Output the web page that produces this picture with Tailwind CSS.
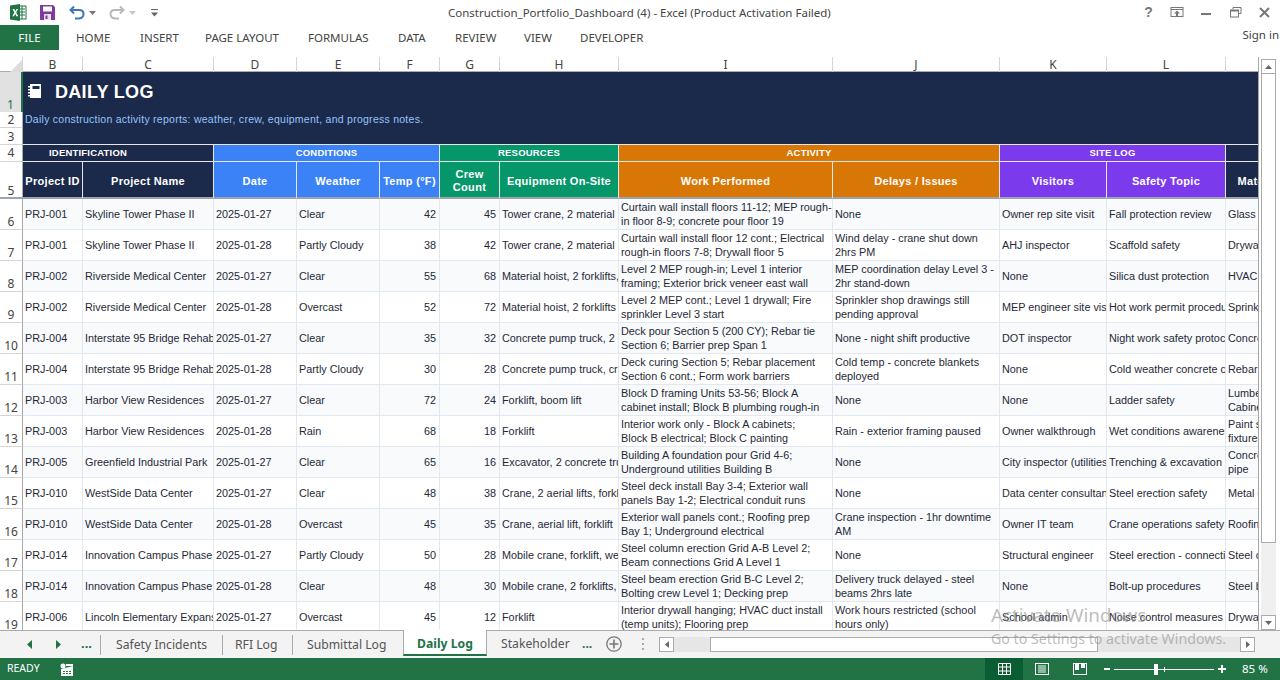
<!DOCTYPE html>
<html>
<head>
	<title>Daily Log - Excel</title>
	<meta charset="UTF-8">
	<script src="https://cdn.jsdelivr.net/npm/@tailwindcss/browser@4"></script>
</head>
<body class="bg-white overflow-hidden">
<div class="relative w-[1280px] h-[680px] flex flex-col overflow-hidden font-['Open_Sans',sans-serif] text-[#444]">

	<!-- title bar -->
	<div class="h-[25px] flex items-center shrink-0">
		<svg class="ml-[10px] w-[17px] h-[17px]" viewBox="0 0 17 17"><rect x="5" y="2" width="11" height="13" fill="#fff" stroke="#217346"/><path d="M9 5h6M9 8h6M9 11h6M12 2v13" stroke="#217346"/><path d="M0 1.500 10 0v17L0 15.500z" fill="#217346"/><path d="M2.500 5h1.800l1 2.200L6.400 5h1.700L6.200 8.500 8.200 12.300H6.400L5.200 9.800 4 12.300H2.300L4.300 8.500z" fill="#fff"/></svg>
		<svg class="ml-[13px] w-[15px] h-[15px]" viewBox="0 0 15 15"><path d="M0 0h13l2 2v13H0z" fill="#80399c"/><rect x="3" y="1.500" width="9" height="5" fill="#fff"/><rect x="4" y="9" width="7" height="6" fill="#e9dcef"/><rect x="5.500" y="10.500" width="2" height="3.500" fill="#80399c"/></svg>
		<svg class="ml-[14px] w-[16px] h-[15px]" viewBox="0 0 16 15"><path d="M5 1.500 1.500 5 5 8.500M2 5h8c6 0 6 8 0 8.500H6" fill="none" stroke="#3f77b5" stroke-width="2"/></svg>
		<svg class="ml-[4px] w-[7px] h-[4px]" viewBox="0 0 7 4"><path d="M0 0h7L3.500 4z" fill="#777"/></svg>
		<svg class="ml-[13px] w-[16px] h-[15px]" viewBox="0 0 16 15"><path d="M11 1.500 14.500 5 11 8.500M14 5H6c-6 0-6 8 0 8.500h4" fill="none" stroke="#b8b8b8" stroke-width="2"/></svg>
		<svg class="ml-[4px] w-[7px] h-[4px]" viewBox="0 0 7 4"><path d="M0 0h7L3.500 4z" fill="#c6c6c6"/></svg>
		<svg class="ml-[15px] w-[7px] h-[8px]" viewBox="0 0 7 8"><path d="M0 0h7v1H0zM0 3.500h7L3.500 7.500z" fill="#666"/></svg>
		<span class="ml-[290px] text-[11.500px] text-[#444] whitespace-nowrap font-['Noto_Sans',sans-serif]">Construction_Portfolio_Dashboard (4) - Excel (Product Activation Failed)</span>
		<div class="ml-auto flex items-center text-[#777] h-full">
			<span class="w-[29px] text-center font-bold text-[14px] font-['Liberation_Sans',sans-serif]">?</span>
			<svg class="w-[29px] h-[11px]" viewBox="0 0 29 11"><rect x="8" y="0.500" width="12" height="9" fill="none" stroke="#777"/><path d="M8 2.500h12" stroke="#777"/><path d="M14 3.500l3 3h-2v3h-2v-3h-2z" fill="#777"/></svg>
			<svg class="w-[29px] h-[11px]" viewBox="0 0 29 11"><rect x="9" y="6" width="10" height="2" fill="#777"/></svg>
			<svg class="w-[29px] h-[11px]" viewBox="0 0 29 11"><path d="M12 2.500V.5h8v6h-2.500" fill="none" stroke="#777"/><rect x="9.500" y="3" width="8" height="7" fill="#fff" stroke="#777"/><path d="M9 3h9v1.500H9z" fill="#777"/></svg>
			<svg class="w-[29px] h-[11px]" viewBox="0 0 29 11"><path d="M10 1l9 9M19 1l-9 9" stroke="#777" stroke-width="2"/></svg>
			<span class="w-[1px]"></span>
		</div>
	</div>

	<!-- ribbon tabs -->
	<div class="h-[25px] flex items-center shrink-0 text-[11.500px] text-[#444] font-['Noto_Sans',sans-serif] relative">
		<div class="w-[59px] h-full bg-[#217346] text-white flex items-center justify-center">FILE</div>
		<span class="ml-[17px] w-[64px]">HOME</span>
		<span class="w-[65px]">INSERT</span>
		<span class="w-[103px]">PAGE LAYOUT</span>
		<span class="w-[90px]">FORMULAS</span>
		<span class="w-[57px]">DATA</span>
		<span class="w-[69px]">REVIEW</span>
		<span class="w-[56px]">VIEW</span>
		<span>DEVELOPER</span>
		<span class="ml-auto mr-[1px] -mt-[6px]">Sign in</span>
	</div>
	<div class="h-[7px] shrink-0"></div>

	<!-- sheet + vertical scrollbar -->
	<div class="h-[573px] shrink-0 flex relative">
		<div class="w-[1259px] overflow-hidden border-r border-[#a6a6a6] font-['Liberation_Sans',sans-serif] text-[10.850px] text-[#1f2937] h-full">
			<table class="table-fixed border-separate border-spacing-0 w-[1356px] [&_td]:overflow-hidden [&_td]:p-0 [&_td]:pl-[2px] [&_td]:border-r [&_td]:border-b [&_td]:border-[#e2e8f0] [&_td]:whitespace-nowrap [&_td]:leading-[14px] [&_th]:p-0 [&_th]:overflow-hidden [&_th]:font-bold [&_th]:text-white [&_th]:border-r [&_th]:border-b [&_th]:border-[#e5e7eb] [&_th]:leading-[15px] [&_tbody_tr:nth-child(odd)_td]:bg-[#f8fafc]">
				<colgroup>
					<col class="w-[23px]"><col class="w-[60px]"><col class="w-[131px]"><col class="w-[83px]"><col class="w-[83px]"><col class="w-[60px]"><col class="w-[60px]"><col class="w-[119px]"><col class="w-[214px]"><col class="w-[167px]"><col class="w-[107px]"><col class="w-[119px]"><col class="w-[130px]">
				</colgroup>
				<thead>
					<tr class="h-[15px] [&_th]:!border-b-0 [&_th]:!font-normal [&_th]:!text-[#444] [&_th]:!text-[12px] [&_th]:bg-white [&_th]:!border-[#d4d4d4] [&_th]:shadow-[inset_0_-1px_0_#ababab] font-['Noto_Sans',sans-serif]">
						<th><svg class="ml-[10px] mt-[3px] w-[12px] h-[12px]" viewBox="0 0 12 12"><path d="M12 0v12H0z" fill="#dcdcdc"/></svg></th>
						<th>B</th><th>C</th><th>D</th><th>E</th><th>F</th><th>G</th><th>H</th><th>I</th><th>J</th><th>K</th><th>L</th><th>M</th>
					</tr>
					<tr class="h-[40px]">
						<th class="!bg-[#e1e1e1] !border-b-0 !border-r-2 !border-[#217346] !text-[#217346] !font-normal !text-[12px] align-bottom font-['Noto_Sans',sans-serif]">1</th>
						<th colspan="12" class="text-left bg-[#1b2a4a] !border-0">
							<div class="flex items-center pt-[1px] pl-[5px] text-[18px] tracking-[0.3px]">
								<svg class="w-[14px] h-[14px] -mt-[3px]" viewBox="0 0 14 14"><path d="M2 0h11v14H2z" fill="#fff"/><path d="M0 2h3v1.500H0zM0 5h3v1.500H0zM0 8h3v1.500H0zM0 11h3v1.500H0z" fill="#fff"/><rect x="4.500" y="2" width="7" height="3" fill="#1b2a4a"/></svg>
								<span class="ml-[13px]">DAILY LOG</span>
							</div>
						</th>
					</tr>
					<tr class="h-[16px]">
						<th class="!bg-white !border-r !border-b-[#d4d4d4] !border-r-[#ababab] !text-[#444] !font-normal !text-[12px] font-['Noto_Sans',sans-serif]">2</th>
						<th colspan="12" class="text-left bg-[#1b2a4a] !border-0 !pl-[2px] !pb-[1px] !font-normal !text-[#93c5fd] !text-[10.500px] tracking-[0.26px]">Daily construction activity reports: weather, crew, equipment, and progress notes.</th>
					</tr>
					<tr class="h-[17px]">
						<th class="!bg-white !border-r-[#ababab] !border-b-[#d4d4d4] !text-[#444] !font-normal !text-[12px] font-['Noto_Sans',sans-serif]">3</th>
						<th colspan="12" class="bg-[#1b2a4a] !border-r-0"></th>
					</tr>
					<tr class="h-[17px] text-[9.500px] tracking-[0.2px] [&_th]:!pb-[1px]">
						<th class="!bg-white !border-r-[#ababab] !border-b-[#d4d4d4] !text-[#444] !font-normal !text-[12px] font-['Noto_Sans',sans-serif]">4</th>
						<th colspan="2" class="bg-[#1b2a4a] text-left !pl-[26px]">IDENTIFICATION</th>
						<th colspan="3" class="bg-[#3b82f6]">CONDITIONS</th>
						<th colspan="2" class="bg-[#059669]">RESOURCES</th>
						<th colspan="2" class="bg-[#d97706]">ACTIVITY</th>
						<th colspan="2" class="bg-[#7c3aed]">SITE LOG</th>
						<th class="bg-[#1b2a4a]"></th>
					</tr>
					<tr class="h-[37px] text-[11px] tracking-[0.3px] [&_th]:!pt-[3px] [&_th]:!leading-[13px] [&_th]:border-b-2 [&_th]:border-b-[#9ca3af]">
						<th class="!bg-white !border-r-[#ababab] !text-[#444] !font-normal !text-[12px] align-bottom font-['Noto_Sans',sans-serif]">5</th>
						<th class="bg-[#1b2a4a]">Project ID</th>
						<th class="bg-[#1b2a4a]">Project Name</th>
						<th class="bg-[#3b82f6]">Date</th>
						<th class="bg-[#3b82f6]">Weather</th>
						<th class="bg-[#3b82f6]">Temp (°F)</th>
						<th class="bg-[#059669]"><div class="-mt-[1px]">Crew Count</div></th>
						<th class="bg-[#059669]">Equipment On-Site</th>
						<th class="bg-[#d97706]">Work Performed</th>
						<th class="bg-[#d97706]">Delays / Issues</th>
						<th class="bg-[#7c3aed]">Visitors</th>
						<th class="bg-[#7c3aed]">Safety Topic</th>
						<th class="bg-[#1b2a4a]">Materials Delivered</th>
					</tr>
				</thead>
				<tbody class="[&_tr]:h-[31px] [&_td:first-child]:!bg-white [&_td:first-child]:!border-r-[#a6a6a6] [&_td:first-child]:!border-b-[#d4d4d4] [&_td:first-child]:align-bottom [&_td:first-child]:text-center [&_td:first-child]:text-[12px] [&_td:first-child]:text-[#444] [&_td:first-child]:!p-0 [&_td:first-child]:font-['Noto_Sans',sans-serif] [&_.n]:text-right [&_.n]:pr-[3px]">
					<tr><td>6</td><td>PRJ-001</td><td>Skyline Tower Phase II</td><td>2025-01-27</td><td>Clear</td><td class="n">42</td><td class="n">45</td><td>Tower crane, 2 material hoists</td><td>Curtain wall install floors 11-12; MEP rough-<br>in floor 8-9; concrete pour floor 19</td><td>None</td><td>Owner rep site visit</td><td>Fall protection review</td><td>Glass panels</td></tr>
					<tr><td>7</td><td>PRJ-001</td><td>Skyline Tower Phase II</td><td>2025-01-28</td><td>Partly Cloudy</td><td class="n">38</td><td class="n">42</td><td>Tower crane, 2 material hoists</td><td>Curtain wall install floor 12 cont.; Electrical<br>rough-in floors 7-8; Drywall floor 5</td><td>Wind delay - crane shut down<br>2hrs PM</td><td>AHJ inspector</td><td>Scaffold safety</td><td>Drywall</td></tr>
					<tr><td>8</td><td>PRJ-002</td><td>Riverside Medical Center</td><td>2025-01-27</td><td>Clear</td><td class="n">55</td><td class="n">68</td><td>Material hoist, 2 forklifts, scissor lift</td><td>Level 2 MEP rough-in; Level 1 interior<br>framing; Exterior brick veneer east wall</td><td>MEP coordination delay Level 3 -<br>2hr stand-down</td><td>None</td><td>Silica dust protection</td><td>HVAC units</td></tr>
					<tr><td>9</td><td>PRJ-002</td><td>Riverside Medical Center</td><td>2025-01-28</td><td>Overcast</td><td class="n">52</td><td class="n">72</td><td>Material hoist, 2 forklifts</td><td>Level 2 MEP cont.; Level 1 drywall; Fire<br>sprinkler Level 3 start</td><td>Sprinkler shop drawings still<br>pending approval</td><td>MEP engineer site visit</td><td>Hot work permit procedures</td><td>Sprinkler pipe</td></tr>
					<tr><td>10</td><td>PRJ-004</td><td>Interstate 95 Bridge Rehab</td><td>2025-01-27</td><td>Clear</td><td class="n">35</td><td class="n">32</td><td>Concrete pump truck, 2 cranes</td><td>Deck pour Section 5 (200 CY); Rebar tie<br>Section 6; Barrier prep Span 1</td><td>None - night shift productive</td><td>DOT inspector</td><td>Night work safety protocols</td><td>Concrete</td></tr>
					<tr><td>11</td><td>PRJ-004</td><td>Interstate 95 Bridge Rehab</td><td>2025-01-28</td><td>Partly Cloudy</td><td class="n">30</td><td class="n">28</td><td>Concrete pump truck, crane</td><td>Deck curing Section 5; Rebar placement<br>Section 6 cont.; Form work barriers</td><td>Cold temp - concrete blankets<br>deployed</td><td>None</td><td>Cold weather concrete care</td><td>Rebar</td></tr>
					<tr><td>12</td><td>PRJ-003</td><td>Harbor View Residences</td><td>2025-01-27</td><td>Clear</td><td class="n">72</td><td class="n">24</td><td>Forklift, boom lift</td><td>Block D framing Units 53-56; Block A<br>cabinet install; Block B plumbing rough-in</td><td>None</td><td>None</td><td>Ladder safety</td><td>Lumber package,<br>Cabinets</td></tr>
					<tr><td>13</td><td>PRJ-003</td><td>Harbor View Residences</td><td>2025-01-28</td><td>Rain</td><td class="n">68</td><td class="n">18</td><td>Forklift</td><td>Interior work only - Block A cabinets;<br>Block B electrical; Block C painting</td><td>Rain - exterior framing paused</td><td>Owner walkthrough</td><td>Wet conditions awareness</td><td>Paint supplies,<br>fixtures</td></tr>
					<tr><td>14</td><td>PRJ-005</td><td>Greenfield Industrial Park</td><td>2025-01-27</td><td>Clear</td><td class="n">65</td><td class="n">16</td><td>Excavator, 2 concrete trucks</td><td>Building A foundation pour Grid 4-6;<br>Underground utilities Building B</td><td>None</td><td>City inspector (utilities)</td><td>Trenching &amp; excavation</td><td>Concrete forms,<br>pipe</td></tr>
					<tr><td>15</td><td>PRJ-010</td><td>WestSide Data Center</td><td>2025-01-27</td><td>Clear</td><td class="n">48</td><td class="n">38</td><td>Crane, 2 aerial lifts, forklift</td><td>Steel deck install Bay 3-4; Exterior wall<br>panels Bay 1-2; Electrical conduit runs</td><td>None</td><td>Data center consultant</td><td>Steel erection safety</td><td>Metal deck</td></tr>
					<tr><td>16</td><td>PRJ-010</td><td>WestSide Data Center</td><td>2025-01-28</td><td>Overcast</td><td class="n">45</td><td class="n">35</td><td>Crane, aerial lift, forklift</td><td>Exterior wall panels cont.; Roofing prep<br>Bay 1; Underground electrical</td><td>Crane inspection - 1hr downtime<br>AM</td><td>Owner IT team</td><td>Crane operations safety</td><td>Roofing</td></tr>
					<tr><td>17</td><td>PRJ-014</td><td>Innovation Campus Phase 1</td><td>2025-01-27</td><td>Partly Cloudy</td><td class="n">50</td><td class="n">28</td><td>Mobile crane, forklift, welders</td><td>Steel column erection Grid A-B Level 2;<br>Beam connections Grid A Level 1</td><td>None</td><td>Structural engineer</td><td>Steel erection - connections</td><td>Steel columns</td></tr>
					<tr><td>18</td><td>PRJ-014</td><td>Innovation Campus Phase 1</td><td>2025-01-28</td><td>Clear</td><td class="n">48</td><td class="n">30</td><td>Mobile crane, 2 forklifts, welders</td><td>Steel beam erection Grid B-C Level 2;<br>Bolting crew Level 1; Decking prep</td><td>Delivery truck delayed - steel<br>beams 2hrs late</td><td>None</td><td>Bolt-up procedures</td><td>Steel beams</td></tr>
					<tr><td>19</td><td>PRJ-006</td><td>Lincoln Elementary Expansion</td><td>2025-01-27</td><td>Overcast</td><td class="n">45</td><td class="n">12</td><td>Forklift</td><td>Interior drywall hanging; HVAC duct install<br>(temp units); Flooring prep</td><td>Work hours restricted (school<br>hours only)</td><td>School admin</td><td>Noise control measures</td><td>Drywall</td></tr>
				</tbody>
			</table>
		</div>
		<!-- vertical scrollbar -->
		<div class="ml-[2px] mt-[2px] w-[15px] flex flex-col bg-[#f0f0f0]">
			<div class="h-[15px] bg-white border border-[#ababab] flex items-center justify-center shrink-0"><svg class="w-[7px] h-[4px]" viewBox="0 0 7 4"><path d="M3.500 0 7 4H0z" fill="#666"/></svg></div>
			<div class="h-[469px] bg-white border-x border-b border-[#ababab] shrink-0"></div>
			<div class="mt-auto h-[15px] bg-white border border-[#ababab] flex items-center justify-center shrink-0"><svg class="w-[7px] h-[4px]" viewBox="0 0 7 4"><path d="M0 0h7L3.500 4z" fill="#666"/></svg></div>
		</div>
	</div>

	<!-- sheet tabs -->
	<div class="h-[28px] shrink-0 flex bg-[#f3f3f3] border-t border-[#ababab] text-[12.200px] text-[#555] font-['Noto_Sans',sans-serif]">
		<div class="w-[100px] flex items-center text-[#217346] shrink-0 h-[24px] mt-[1px]">
			<svg class="ml-[27px] w-[5px] h-[9px]" viewBox="0 0 5 9"><path d="M5 0v9L0 4.500z" fill="#217346"/></svg>
			<svg class="ml-[24px] w-[5px] h-[9px]" viewBox="0 0 5 9"><path d="M0 0v9l5-4.500z" fill="#217346"/></svg>
			<span class="ml-[20px] font-bold text-[13px] leading-none -mt-[2px]">...</span>
		</div>
		<div class="flex h-[24px] mt-[2px] items-center">
			<span class="border-l border-[#ababab] h-[20px] w-[122px] pl-[15px] flex items-center">Safety Incidents</span>
			<span class="border-l border-[#ababab] h-[20px] w-[70px] pl-[12px] flex items-center">RFI Log</span>
			<span class="border-l border-[#ababab] h-[20px] w-[111px] pl-[14px] flex items-center">Submittal Log</span>
		</div>
		<div class="w-[82px] h-[24px] -mt-[1px] bg-white border-x border-[#ababab] border-b-2 border-b-[#217346] font-bold text-[#217346] text-center shrink-0 leading-[27px] box-content">Daily Log</div>
		<span class="ml-[14px] mt-[4px] w-[81px]">Stakeholder</span>
		<span class="mt-[4px] w-[12px] font-bold text-[#217346] leading-[18px]">...</span>
		<svg class="ml-[12px] mt-[5px] w-[16px] h-[16px]" viewBox="0 0 16 16"><circle cx="8" cy="8" r="7.200" fill="none" stroke="#777" stroke-width="1.300"/><path d="M8 3.500v9M3.500 8h9" stroke="#777" stroke-width="1.600"/></svg>
		<svg class="ml-[20px] mt-[6px] w-[3px] h-[14px]" viewBox="0 0 3 14"><path d="M0 1h2v2H0zM0 6h2v2H0zM0 11h2v2H0z" fill="#aaa"/></svg>
		<!-- horizontal scrollbar -->
		<div class="ml-[14px] mt-[6px] w-[596px] h-[15px] bg-[#e6e6e6] flex">
			<div class="w-[15px] bg-white border border-[#ababab] flex items-center justify-center shrink-0"><svg class="w-[4px] h-[7px]" viewBox="0 0 4 7"><path d="M4 0v7L0 3.500z" fill="#666"/></svg></div>
			<div class="ml-[36px] w-[388px] bg-white border border-[#ababab] shrink-0"></div>
			<div class="ml-auto w-[15px] bg-white border border-[#ababab] flex items-center justify-center shrink-0"><svg class="w-[4px] h-[7px]" viewBox="0 0 4 7"><path d="M0 0v7l4-3.500z" fill="#666"/></svg></div>
		</div>
	</div>

	<!-- status bar -->
	<div class="h-[22px] shrink-0 bg-[#217346] text-white flex items-center text-[10.500px] font-['Noto_Sans',sans-serif]">
		<span class="ml-[7px]">READY</span>
		<svg class="ml-[20px] w-[13px] h-[13px]" viewBox="0 0 13 13"><circle cx="3" cy="3" r="2.500" fill="#fff"/><path d="M1 6h12V1H6v2h7M1 6v7h12V6" fill="#fff"/><path d="M3 8h2v1H3zM6 8h2v1H6zM9 8h2v1H9zM3 10h2v1H3zM6 10h2v1H6zM9 10h2v1H9z" fill="#217346"/></svg>
		<div class="ml-auto w-[295px] h-full flex items-center">
			<div class="w-[38px] h-full bg-[#0a5c33] flex items-center justify-center">
				<svg class="w-[13px] h-[12px]" viewBox="0 0 13 12"><path d="M.5.500h12v11H.500zM.500 4h12M.500 8h12M4.500.500v11M8.500.500v11" fill="none" stroke="#fff"/></svg>
			</div>
			<svg class="ml-[12px] w-[14px] h-[12px]" viewBox="0 0 14 12"><rect x=".5" y=".5" width="13" height="11" fill="none" stroke="#fff"/><path d="M3 3h8M3 5h8M3 7h8M3 9h8" stroke="#fff"/></svg>
			<svg class="ml-[24px] w-[14px] h-[12px]" viewBox="0 0 14 12"><rect x=".5" y=".5" width="13" height="11" fill="none" stroke="#fff"/><path d="M2 1h4v6H2zM8 1h4v4H8z" fill="#fff"/></svg>
			<svg class="ml-[17px] w-[6px] h-[2px]" viewBox="0 0 6 2"><path d="M0 0h6v2H0z" fill="#fff"/></svg>
			<div class="ml-[4px] relative w-[100px] h-[1px] bg-white">
				<span class="absolute left-[40px] -top-[5px] w-[4px] h-[11px] bg-white"></span>
				<span class="absolute left-[50px] -top-[2px] w-[1px] h-[5px] bg-white"></span>
			</div>
			<svg class="ml-[4px] w-[8px] h-[8px]" viewBox="0 0 8 8"><path d="M3 0h2v3h3v2H5v3H3V5H0V3h3z" fill="#fff"/></svg>
			<span class="ml-[16px] text-[11.500px] whitespace-nowrap">85 %</span>
		</div>
	</div>

	<!-- activation watermark -->
	<div class="absolute left-[991px] top-[602px] text-[#8f8f8f]/60 pointer-events-none whitespace-nowrap font-['Noto_Sans',sans-serif]">
		<div class="text-[18.800px] leading-[27px]">Activate Windows</div>
		<div class="text-[14.200px] leading-[19px]">Go to Settings to activate Windows.</div>
	</div>
</div>
</body>
</html>
